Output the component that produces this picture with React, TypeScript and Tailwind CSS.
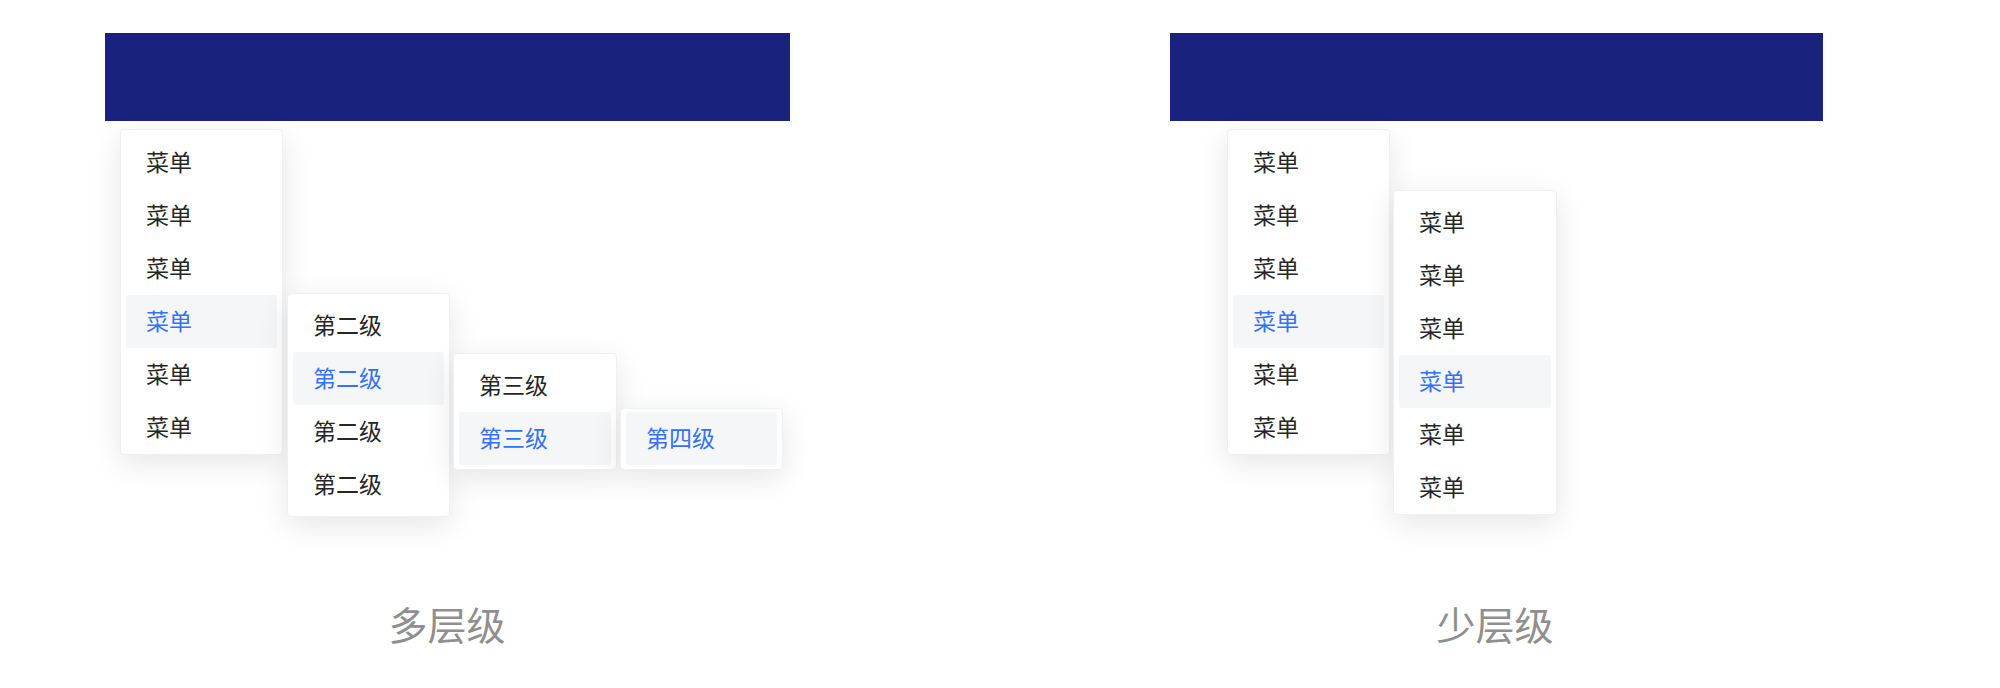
type MenuItem = { label: string; active?: boolean };

const menuItems = (label: string, count: number, activeIndex: number): MenuItem[] =>
  Array.from({ length: count }, (_, i) => ({ label, active: i === activeIndex }));

// A single dropdown panel: white card, soft shadow, rows of 53px.
function Menu({
  items,
  className = "",
  width = "w-[163px]",
}: {
  items: MenuItem[];
  className?: string;
  width?: string;
}) {
  return (
    <div
      className={`${width} shrink-0 rounded-[4px] border border-[#eff0f1] bg-white px-[5px] shadow-[0_8px_30px_rgba(0,0,0,0.1)] ${className}`}
    >
      {items.map((item, i) => (
        <div
          key={i}
          className={`flex h-[53px] items-center rounded-[3px] pb-[3px] pl-[20px] text-[23px] leading-none ${
            item.active ? "bg-[#f5f6f7] text-[#3370ff]" : "text-[#262626]"
          }`}
        >
          {item.label}
        </div>
      ))}
    </div>
  );
}

function Caption({ children }: { children: string }) {
  return <div className="text-center text-[39px] leading-none text-[#8f8f8f]">{children}</div>;
}

export default function App() {
  return (
    <div className="flex h-[688px] w-[2000px] bg-white font-['Noto_Sans_CJK_SC',sans-serif]">
      {/* deep cascade: four levels */}
      <div className="flex w-[894px] flex-col pt-[33px]">
        <div className="ml-[105px] h-[88px] w-[685px] bg-[#19237d]" />
        <div className="flex h-[483px] items-start pl-[120px] pt-[8px]">
          <Menu items={menuItems("菜单", 6, 3)} className="pt-[6px]" />
          <Menu items={menuItems("第二级", 4, 1)} className="ml-[4px] mt-[164px] py-[5px]" />
          <Menu
            items={menuItems("第三级", 2, 1)}
            width="w-[164px]"
            className="ml-[3px] mt-[224px] pb-[4px] pt-[5px]"
          />
          <Menu items={menuItems("第四级", 1, 0)} className="ml-[3px] mt-[279px] pb-[4px] pt-[3px]" />
        </div>
        <Caption>多层级</Caption>
      </div>

      {/* shallow cascade: two levels */}
      <div className="ml-[96px] flex w-[1010px] flex-col pt-[33px]">
        <div className="ml-[180px] h-[88px] w-[653px] bg-[#19237d]" />
        <div className="flex h-[483px] items-start pl-[237px] pt-[8px]">
          <Menu items={menuItems("菜单", 6, 3)} className="pt-[6px]" />
          <Menu items={menuItems("菜单", 6, 3)} width="w-[164px]" className="ml-[3px] mt-[61px] pt-[5px]" />
        </div>
        <Caption>少层级</Caption>
      </div>
    </div>
  );
}
